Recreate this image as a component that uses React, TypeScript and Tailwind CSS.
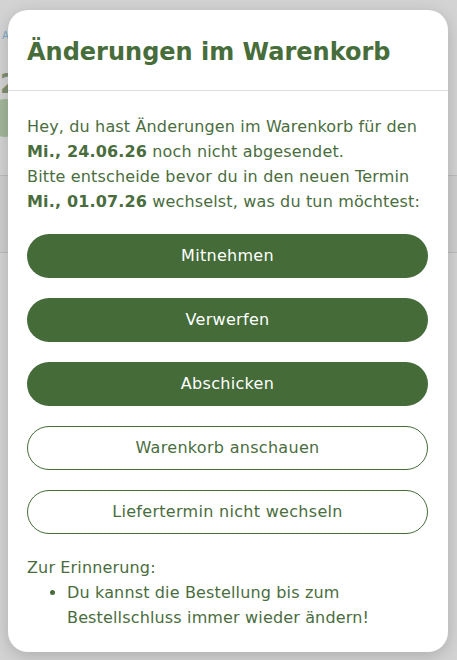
import React from "react";

const font = { fontFamily: '"DejaVu Sans", "Liberation Sans", sans-serif' };

export default function App() {
  const filled = ["Mitnehmen", "Verwerfen", "Abschicken"];
  const outlined = ["Warenkorb anschauen", "Liefertermin nicht wechseln"];

  return (
    <div className="relative h-[660px] w-[457px] overflow-hidden bg-[#d3d3d3]" style={font}>
      {/* dimmed page behind the dialog */}
      <div className="absolute inset-0 flex flex-col">
        <div className="h-[28px]" />
        <div className="pl-[2px] text-[10px] text-[#7fa6c8]">A</div>
        <div className="mt-[28px] text-[26px] font-bold leading-none text-[#7d8f74]">2</div>
        <div className="mt-[2px] h-[38px] w-[38px] -ml-[14px] rounded-full bg-[#a3b69a]" />
        <div className="mt-[38px] h-px w-full bg-[#bdbdbd]" />
        <div className="h-[76px] w-full bg-[#cdcdcd]" />
        <div className="h-px w-full bg-[#bdbdbd]" />
      </div>

      <div className="relative pl-[8px] pr-[9px] pt-[10px]">
        <div className="flex h-[642px] flex-col rounded-[20px] bg-white shadow-[0_4px_16px_rgba(0,0,0,0.18)]">
          <div className="border-b border-[#dedede] pb-[22px] pl-[19px] pr-[20px] pt-[26px]">
            <h1 className="text-[24px] font-bold leading-[32px] text-[#466d3a]">
              Änderungen im Warenkorb
            </h1>
          </div>

          <div className="flex flex-col pl-[19px] pr-[20px] pt-[23px] text-[16px] tracking-[0.15px] text-[#4a6d3e]">
            <p className="whitespace-nowrap leading-[25px]">
              Hey, du hast Änderungen im Warenkorb für den
              <br />
              <b className="font-bold">Mi., 24.06.26</b> noch nicht abgesendet.
              <br />
              Bitte entscheide bevor du in den neuen Termin
              <br />
              <b className="font-bold">Mi., 01.07.26</b> wechselst, was du tun möchtest:
            </p>

            <div className="mt-[20px] flex flex-col gap-[20px]">
              {filled.map((label) => (
                <button
                  key={label}
                  className="h-[44px] w-full rounded-full bg-[#446b38] text-[16px] tracking-[0.3px] text-white"
                >
                  {label}
                </button>
              ))}
              {outlined.map((label) => (
                <button
                  key={label}
                  className="h-[44px] w-full rounded-full border border-[#446b38] bg-white text-[16px] tracking-[0.3px] text-[#4a6d3e]"
                >
                  {label}
                </button>
              ))}
            </div>

            <div className="mt-[21px] leading-[25px]">
              <p>Zur Erinnerung:</p>
              <ul className="list-disc pl-[40px] marker:text-[#4a6d3e]">
                <li>
                  Du kannst die Bestellung bis zum
                  <br />
                  Bestellschluss immer wieder ändern!
                </li>
              </ul>
            </div>
          </div>
        </div>
      </div>
    </div>
  );
}
